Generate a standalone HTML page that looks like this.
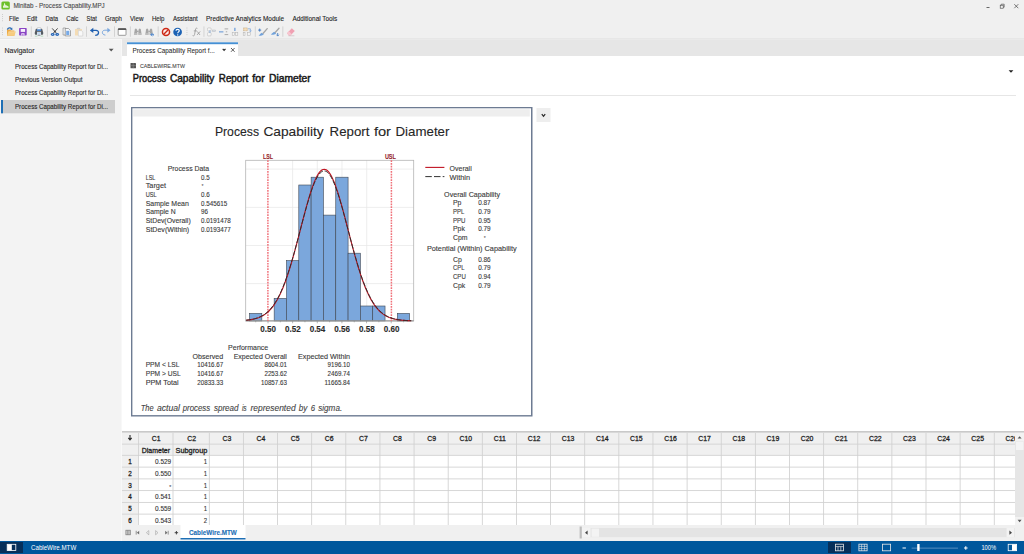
<!DOCTYPE html>
<html lang="en">
<head>
<meta charset="utf-8">
<title>Minitab - Process Capability.MPJ</title>
<style>
html,body{margin:0;padding:0;background:#ffffff;overflow:hidden;}
body{width:1024px;height:554px;font-family:"Liberation Sans",sans-serif;}
svg{display:block;position:absolute;left:0;top:0;}
svg text{font-family:"Liberation Sans",sans-serif;white-space:pre;}
</style>
</head>
<body>
<svg width="1024" height="554" viewBox="0 0 1024 554">
<rect x="0" y="0" width="1024" height="554" fill="#ffffff" />
<rect x="0" y="0" width="1024" height="39" fill="#f0f0f0" />
<rect x="0" y="38.4" width="1024" height="0.9" fill="#e2e2e2" />
<rect x="0" y="39.3" width="122" height="0.7" fill="#fafafa" />
<rect x="122" y="39.3" width="902" height="0.7" fill="#e6e6e6" />
<rect x="0" y="40" width="121" height="501" fill="#f3f3f3" />
<rect x="121" y="40" width="1" height="501" fill="#f8f8f8" />
<rect x="122" y="40" width="902" height="16" fill="#e6e6e6" />
<rect x="127" y="42.3" width="111" height="13.7" fill="#ffffff" />
<rect x="127" y="42.3" width="111" height="1.9" fill="#4590d4" />
<rect x="1" y="100" width="114" height="13.3" fill="#cdcdcd" />
<rect x="1" y="100" width="2" height="13.3" fill="#1e6fb5" />
<rect x="1.4" y="1.4" width="8.4" height="8" rx="1.5" fill="#6dc02a"/>
<path d="M3 7.7 V6.3 C3.6 5.9 4 5 4.1 3.3 H5 C5.2 4.8 5.6 5.4 6.2 5.6 L6.6 5.2 C7.2 5.8 8 6 8.6 6.4 V7.7 Z" fill="#ffffff" opacity="0.82"/>
<text x="13.4" y="7.6" font-size="6.5" textLength="91.30" lengthAdjust="spacingAndGlyphs" stroke="#4a4a4a" stroke-width="0.11" fill="#4a4a4a">Minitab - Process Capability.MPJ</text>
<line x1="986.5" y1="7.5" x2="989.5" y2="7.5" stroke="#444" stroke-width="0.8" />
<rect x="1000.2" y="5.2" width="3" height="3" fill="none" stroke="#444" stroke-width="0.6"/>
<path d="M1001.2 5.2 V4.2 H1004.2 V7.2 H1003.2" fill="none" stroke="#444" stroke-width="0.6"/>
<path d="M1014.3 4.2 L1018.3 8.2 M1018.3 4.2 L1014.3 8.2" stroke="#444" stroke-width="0.7" fill="none"/>
<rect x="2.2" y="14" width="0.7" height="0.9" fill="#b8b8b8" />
<rect x="2.2" y="16.1" width="0.7" height="0.9" fill="#b8b8b8" />
<rect x="2.2" y="18.2" width="0.7" height="0.9" fill="#b8b8b8" />
<rect x="2.2" y="20.3" width="0.7" height="0.9" fill="#b8b8b8" />
<text x="9" y="20.6" font-size="6.5" textLength="10.00" lengthAdjust="spacingAndGlyphs" stroke="#1e1e1e" stroke-width="0.11" fill="#1e1e1e">File</text>
<text x="26.9" y="20.6" font-size="6.5" textLength="10.35" lengthAdjust="spacingAndGlyphs" stroke="#1e1e1e" stroke-width="0.11" fill="#1e1e1e">Edit</text>
<text x="45.6" y="20.6" font-size="6.5" textLength="12.50" lengthAdjust="spacingAndGlyphs" stroke="#1e1e1e" stroke-width="0.11" fill="#1e1e1e">Data</text>
<text x="66.25" y="20.6" font-size="6.5" textLength="12.15" lengthAdjust="spacingAndGlyphs" stroke="#1e1e1e" stroke-width="0.11" fill="#1e1e1e">Calc</text>
<text x="86.6" y="20.6" font-size="6.5" textLength="10.30" lengthAdjust="spacingAndGlyphs" stroke="#1e1e1e" stroke-width="0.11" fill="#1e1e1e">Stat</text>
<text x="105" y="20.6" font-size="6.5" textLength="16.90" lengthAdjust="spacingAndGlyphs" stroke="#1e1e1e" stroke-width="0.11" fill="#1e1e1e">Graph</text>
<text x="130" y="20.6" font-size="6.5" textLength="13.50" lengthAdjust="spacingAndGlyphs" stroke="#1e1e1e" stroke-width="0.11" fill="#1e1e1e">View</text>
<text x="151.9" y="20.6" font-size="6.5" textLength="12.50" lengthAdjust="spacingAndGlyphs" stroke="#1e1e1e" stroke-width="0.11" fill="#1e1e1e">Help</text>
<text x="172.9" y="20.6" font-size="6.5" textLength="24.85" lengthAdjust="spacingAndGlyphs" stroke="#1e1e1e" stroke-width="0.11" fill="#1e1e1e">Assistant</text>
<text x="206" y="20.6" font-size="6.5" textLength="78.00" lengthAdjust="spacingAndGlyphs" stroke="#1e1e1e" stroke-width="0.11" fill="#1e1e1e">Predictive Analytics Module</text>
<text x="292.5" y="20.6" font-size="6.5" textLength="44.75" lengthAdjust="spacingAndGlyphs" stroke="#1e1e1e" stroke-width="0.11" fill="#1e1e1e">Additional Tools</text>
<text x="4.4" y="52.9" font-size="7.1" textLength="30.10" lengthAdjust="spacingAndGlyphs" stroke="#2a2a2a" stroke-width="0.11" fill="#2a2a2a">Navigator</text>
<path d="M108.8 48.8 L113.6 48.8 L111.2 51.6 Z" fill="#555"/>
<text x="15" y="68.9" font-size="6.5" textLength="93.00" lengthAdjust="spacingAndGlyphs" stroke="#1e1e1e" stroke-width="0.11" fill="#1e1e1e">Process Capability Report for Di...</text>
<text x="15" y="82" font-size="6.5" textLength="67.60" lengthAdjust="spacingAndGlyphs" stroke="#1e1e1e" stroke-width="0.11" fill="#1e1e1e">Previous Version Output</text>
<text x="15" y="95.4" font-size="6.5" textLength="93.00" lengthAdjust="spacingAndGlyphs" stroke="#1e1e1e" stroke-width="0.11" fill="#1e1e1e">Process Capability Report for Di...</text>
<text x="15" y="108.5" font-size="6.5" textLength="93.00" lengthAdjust="spacingAndGlyphs" stroke="#1e1e1e" stroke-width="0.11" fill="#1e1e1e">Process Capability Report for Di...</text>
<text x="132.4" y="52.6" font-size="6.5" textLength="82.50" lengthAdjust="spacingAndGlyphs" stroke="#2a2a2a" stroke-width="0.06" fill="#2a2a2a">Process Capability Report f...</text>
<path d="M222.7 48.8 L224.1 50.4 L225.5 48.8" fill="none" stroke="#333" stroke-width="1.15"/>
<path d="M231 48 L234.6 51.8 M234.6 48 L231 51.8" stroke="#333" stroke-width="0.8" fill="none"/>
<rect x="130.5" y="63" width="5.5" height="5.3" rx="0.6" fill="#555"/>
<path d="M130.5 65.6 H136 M133.2 63 V68.3" stroke="#999" stroke-width="0.5"/>
<text x="139.9" y="67.6" font-size="6.2" textLength="45.00" lengthAdjust="spacingAndGlyphs" stroke="#4a4a4a" stroke-width="0.11" fill="#4a4a4a">CABLEWIRE.MTW</text>
<text x="132.8" y="82" font-size="10" textLength="33.30" lengthAdjust="spacingAndGlyphs" stroke="#1a1a1a" stroke-width="0.48" fill="#1a1a1a">Process</text>
<text x="169.9" y="82" font-size="10" textLength="44.40" lengthAdjust="spacingAndGlyphs" stroke="#1a1a1a" stroke-width="0.48" fill="#1a1a1a">Capability</text>
<text x="218.8" y="82" font-size="10" textLength="29.50" lengthAdjust="spacingAndGlyphs" stroke="#1a1a1a" stroke-width="0.48" fill="#1a1a1a">Report</text>
<text x="252.3" y="82" font-size="10" textLength="12.40" lengthAdjust="spacingAndGlyphs" stroke="#1a1a1a" stroke-width="0.48" fill="#1a1a1a">for</text>
<text x="269.1" y="82" font-size="10" textLength="41.60" lengthAdjust="spacingAndGlyphs" stroke="#1a1a1a" stroke-width="0.48" fill="#1a1a1a">Diameter</text>
<path d="M1008.6 70.2 L1013.4 70.2 L1011 72.8 Z" fill="#222"/>
<rect x="130" y="95" width="886" height="1" fill="#e6e6e6" />
<rect x="131" y="107" width="401.5" height="309.5" fill="#6d7b92" />
<rect x="132.4" y="108.3" width="398.6" height="306.8" fill="#ffffff" />
<rect x="133.2" y="109.2" width="396.6" height="7.3" fill="#eeeeee" />
<rect x="536.5" y="108" width="14" height="14" fill="#eeeeee" />
<path d="M541.8 114.2 L543.5 116.3 L545.2 114.2" fill="none" stroke="#2a2a2a" stroke-width="1.25"/>
<rect x="122" y="431" width="902" height="1.8" fill="#c9c9c9" />
<rect x="122" y="432.8" width="893" height="22.5" fill="#f0f0f0" />
<rect x="122" y="455.3" width="16.6" height="69.7" fill="#f0f0f0" />
<rect x="138.18" y="432.8" width="0.85" height="92.2" fill="#d0d0d0" />
<rect x="172.58" y="432.8" width="0.85" height="92.2" fill="#d0d0d0" />
<rect x="208.88" y="432.8" width="0.85" height="92.2" fill="#d0d0d0" />
<rect x="242.98" y="432.8" width="0.85" height="92.2" fill="#d0d0d0" />
<rect x="277.11" y="432.8" width="0.85" height="92.2" fill="#d0d0d0" />
<rect x="311.24" y="432.8" width="0.85" height="92.2" fill="#d0d0d0" />
<rect x="345.37" y="432.8" width="0.85" height="92.2" fill="#d0d0d0" />
<rect x="379.5" y="432.8" width="0.85" height="92.2" fill="#d0d0d0" />
<rect x="413.63" y="432.8" width="0.85" height="92.2" fill="#d0d0d0" />
<rect x="447.76" y="432.8" width="0.85" height="92.2" fill="#d0d0d0" />
<rect x="481.89" y="432.8" width="0.85" height="92.2" fill="#d0d0d0" />
<rect x="516.02" y="432.8" width="0.85" height="92.2" fill="#d0d0d0" />
<rect x="550.15" y="432.8" width="0.85" height="92.2" fill="#d0d0d0" />
<rect x="584.28" y="432.8" width="0.85" height="92.2" fill="#d0d0d0" />
<rect x="618.41" y="432.8" width="0.85" height="92.2" fill="#d0d0d0" />
<rect x="652.54" y="432.8" width="0.85" height="92.2" fill="#d0d0d0" />
<rect x="686.67" y="432.8" width="0.85" height="92.2" fill="#d0d0d0" />
<rect x="720.8" y="432.8" width="0.85" height="92.2" fill="#d0d0d0" />
<rect x="754.93" y="432.8" width="0.85" height="92.2" fill="#d0d0d0" />
<rect x="789.06" y="432.8" width="0.85" height="92.2" fill="#d0d0d0" />
<rect x="823.19" y="432.8" width="0.85" height="92.2" fill="#d0d0d0" />
<rect x="857.32" y="432.8" width="0.85" height="92.2" fill="#d0d0d0" />
<rect x="891.45" y="432.8" width="0.85" height="92.2" fill="#d0d0d0" />
<rect x="925.58" y="432.8" width="0.85" height="92.2" fill="#d0d0d0" />
<rect x="959.71" y="432.8" width="0.85" height="92.2" fill="#d0d0d0" />
<rect x="993.84" y="432.8" width="0.85" height="92.2" fill="#d0d0d0" />
<rect x="122" y="443.68" width="893" height="0.85" fill="#d0d0d0" />
<rect x="122" y="454.88" width="893" height="0.85" fill="#d0d0d0" />
<rect x="122" y="466.68" width="893" height="0.85" fill="#d0d0d0" />
<rect x="122" y="478.48" width="893" height="0.85" fill="#d0d0d0" />
<rect x="122" y="490.18" width="893" height="0.85" fill="#d0d0d0" />
<rect x="122" y="501.98" width="893" height="0.85" fill="#d0d0d0" />
<rect x="122" y="513.68" width="893" height="0.85" fill="#d0d0d0" />
<text x="156.3" y="440.9" font-size="6.7" textLength="8.82" lengthAdjust="spacingAndGlyphs" text-anchor="middle" stroke="#1e1e1e" stroke-width="0.26" fill="#1e1e1e">C1</text>
<text x="191.65" y="440.9" font-size="6.7" textLength="8.82" lengthAdjust="spacingAndGlyphs" text-anchor="middle" stroke="#1e1e1e" stroke-width="0.26" fill="#1e1e1e">C2</text>
<text x="226.85" y="440.9" font-size="6.7" textLength="8.82" lengthAdjust="spacingAndGlyphs" text-anchor="middle" stroke="#1e1e1e" stroke-width="0.26" fill="#1e1e1e">C3</text>
<text x="260.965" y="440.9" font-size="6.7" textLength="8.82" lengthAdjust="spacingAndGlyphs" text-anchor="middle" stroke="#1e1e1e" stroke-width="0.26" fill="#1e1e1e">C4</text>
<text x="295.095" y="440.9" font-size="6.7" textLength="8.82" lengthAdjust="spacingAndGlyphs" text-anchor="middle" stroke="#1e1e1e" stroke-width="0.26" fill="#1e1e1e">C5</text>
<text x="329.225" y="440.9" font-size="6.7" textLength="8.82" lengthAdjust="spacingAndGlyphs" text-anchor="middle" stroke="#1e1e1e" stroke-width="0.26" fill="#1e1e1e">C6</text>
<text x="363.355" y="440.9" font-size="6.7" textLength="8.82" lengthAdjust="spacingAndGlyphs" text-anchor="middle" stroke="#1e1e1e" stroke-width="0.26" fill="#1e1e1e">C7</text>
<text x="397.485" y="440.9" font-size="6.7" textLength="8.82" lengthAdjust="spacingAndGlyphs" text-anchor="middle" stroke="#1e1e1e" stroke-width="0.26" fill="#1e1e1e">C8</text>
<text x="431.615" y="440.9" font-size="6.7" textLength="8.82" lengthAdjust="spacingAndGlyphs" text-anchor="middle" stroke="#1e1e1e" stroke-width="0.26" fill="#1e1e1e">C9</text>
<text x="465.745" y="440.9" font-size="6.7" textLength="12.66" lengthAdjust="spacingAndGlyphs" text-anchor="middle" stroke="#1e1e1e" stroke-width="0.26" fill="#1e1e1e">C10</text>
<text x="499.875" y="440.9" font-size="6.7" textLength="12.15" lengthAdjust="spacingAndGlyphs" text-anchor="middle" stroke="#1e1e1e" stroke-width="0.26" fill="#1e1e1e">C11</text>
<text x="534.005" y="440.9" font-size="6.7" textLength="12.66" lengthAdjust="spacingAndGlyphs" text-anchor="middle" stroke="#1e1e1e" stroke-width="0.26" fill="#1e1e1e">C12</text>
<text x="568.135" y="440.9" font-size="6.7" textLength="12.66" lengthAdjust="spacingAndGlyphs" text-anchor="middle" stroke="#1e1e1e" stroke-width="0.26" fill="#1e1e1e">C13</text>
<text x="602.265" y="440.9" font-size="6.7" textLength="12.66" lengthAdjust="spacingAndGlyphs" text-anchor="middle" stroke="#1e1e1e" stroke-width="0.26" fill="#1e1e1e">C14</text>
<text x="636.395" y="440.9" font-size="6.7" textLength="12.66" lengthAdjust="spacingAndGlyphs" text-anchor="middle" stroke="#1e1e1e" stroke-width="0.26" fill="#1e1e1e">C15</text>
<text x="670.525" y="440.9" font-size="6.7" textLength="12.66" lengthAdjust="spacingAndGlyphs" text-anchor="middle" stroke="#1e1e1e" stroke-width="0.26" fill="#1e1e1e">C16</text>
<text x="704.655" y="440.9" font-size="6.7" textLength="12.66" lengthAdjust="spacingAndGlyphs" text-anchor="middle" stroke="#1e1e1e" stroke-width="0.26" fill="#1e1e1e">C17</text>
<text x="738.785" y="440.9" font-size="6.7" textLength="12.66" lengthAdjust="spacingAndGlyphs" text-anchor="middle" stroke="#1e1e1e" stroke-width="0.26" fill="#1e1e1e">C18</text>
<text x="772.915" y="440.9" font-size="6.7" textLength="12.66" lengthAdjust="spacingAndGlyphs" text-anchor="middle" stroke="#1e1e1e" stroke-width="0.26" fill="#1e1e1e">C19</text>
<text x="807.045" y="440.9" font-size="6.7" textLength="12.66" lengthAdjust="spacingAndGlyphs" text-anchor="middle" stroke="#1e1e1e" stroke-width="0.26" fill="#1e1e1e">C20</text>
<text x="841.175" y="440.9" font-size="6.7" textLength="12.66" lengthAdjust="spacingAndGlyphs" text-anchor="middle" stroke="#1e1e1e" stroke-width="0.26" fill="#1e1e1e">C21</text>
<text x="875.305" y="440.9" font-size="6.7" textLength="12.66" lengthAdjust="spacingAndGlyphs" text-anchor="middle" stroke="#1e1e1e" stroke-width="0.26" fill="#1e1e1e">C22</text>
<text x="909.435" y="440.9" font-size="6.7" textLength="12.66" lengthAdjust="spacingAndGlyphs" text-anchor="middle" stroke="#1e1e1e" stroke-width="0.26" fill="#1e1e1e">C23</text>
<text x="943.565" y="440.9" font-size="6.7" textLength="12.66" lengthAdjust="spacingAndGlyphs" text-anchor="middle" stroke="#1e1e1e" stroke-width="0.26" fill="#1e1e1e">C24</text>
<text x="977.695" y="440.9" font-size="6.7" textLength="12.66" lengthAdjust="spacingAndGlyphs" text-anchor="middle" stroke="#1e1e1e" stroke-width="0.26" fill="#1e1e1e">C25</text>
<clipPath id="c26"><rect x="995" y="433" width="20" height="11"/></clipPath>
<g clip-path="url(#c26)">
<text x="1005.6" y="440.9" font-size="6.7" textLength="11.92" lengthAdjust="spacingAndGlyphs" stroke="#1e1e1e" stroke-width="0.26" fill="#1e1e1e">C26</text>
</g>
<text x="141.8" y="452.5" font-size="6.7" textLength="28.20" lengthAdjust="spacingAndGlyphs" stroke="#1e1e1e" stroke-width="0.28" fill="#1e1e1e">Diameter</text>
<text x="175.5" y="452.5" font-size="6.7" textLength="31.90" lengthAdjust="spacingAndGlyphs" stroke="#1e1e1e" stroke-width="0.28" fill="#1e1e1e">Subgroup</text>
<path d="M130 435 V439.6 M128.3 437.8 L130 439.8 L131.7 437.8" fill="none" stroke="#2a2a2a" stroke-width="1.1"/>
<text x="130" y="464" font-size="6.8" textLength="3.52" lengthAdjust="spacingAndGlyphs" text-anchor="middle" stroke="#1e1e1e" stroke-width="0.28" fill="#1e1e1e">1</text>
<text x="171.2" y="464" font-size="6.5" textLength="16.20" lengthAdjust="spacingAndGlyphs" text-anchor="end" stroke="#333" stroke-width="0.11" fill="#333">0.529</text>
<text x="207" y="464" font-size="6.5" textLength="3.36" lengthAdjust="spacingAndGlyphs" text-anchor="end" stroke="#333" stroke-width="0.11" fill="#333">1</text>
<text x="130" y="475.75" font-size="6.8" textLength="3.52" lengthAdjust="spacingAndGlyphs" text-anchor="middle" stroke="#1e1e1e" stroke-width="0.28" fill="#1e1e1e">2</text>
<text x="171.2" y="475.75" font-size="6.5" textLength="16.20" lengthAdjust="spacingAndGlyphs" text-anchor="end" stroke="#333" stroke-width="0.11" fill="#333">0.550</text>
<text x="207" y="475.75" font-size="6.5" textLength="3.36" lengthAdjust="spacingAndGlyphs" text-anchor="end" stroke="#333" stroke-width="0.11" fill="#333">1</text>
<text x="130" y="487.5" font-size="6.8" textLength="3.52" lengthAdjust="spacingAndGlyphs" text-anchor="middle" stroke="#1e1e1e" stroke-width="0.28" fill="#1e1e1e">3</text>
<text x="171.2" y="488.5" font-size="5.5" textLength="1.99" lengthAdjust="spacingAndGlyphs" text-anchor="end" stroke="#555" stroke-width="0.11" fill="#555">*</text>
<text x="207" y="487.5" font-size="6.5" textLength="3.36" lengthAdjust="spacingAndGlyphs" text-anchor="end" stroke="#333" stroke-width="0.11" fill="#333">1</text>
<text x="130" y="499.25" font-size="6.8" textLength="3.52" lengthAdjust="spacingAndGlyphs" text-anchor="middle" stroke="#1e1e1e" stroke-width="0.28" fill="#1e1e1e">4</text>
<text x="171.2" y="499.25" font-size="6.5" textLength="16.20" lengthAdjust="spacingAndGlyphs" text-anchor="end" stroke="#333" stroke-width="0.11" fill="#333">0.541</text>
<text x="207" y="499.25" font-size="6.5" textLength="3.36" lengthAdjust="spacingAndGlyphs" text-anchor="end" stroke="#333" stroke-width="0.11" fill="#333">1</text>
<text x="130" y="511" font-size="6.8" textLength="3.52" lengthAdjust="spacingAndGlyphs" text-anchor="middle" stroke="#1e1e1e" stroke-width="0.28" fill="#1e1e1e">5</text>
<text x="171.2" y="511" font-size="6.5" textLength="16.20" lengthAdjust="spacingAndGlyphs" text-anchor="end" stroke="#333" stroke-width="0.11" fill="#333">0.559</text>
<text x="207" y="511" font-size="6.5" textLength="3.36" lengthAdjust="spacingAndGlyphs" text-anchor="end" stroke="#333" stroke-width="0.11" fill="#333">1</text>
<text x="130" y="522.75" font-size="6.8" textLength="3.52" lengthAdjust="spacingAndGlyphs" text-anchor="middle" stroke="#1e1e1e" stroke-width="0.28" fill="#1e1e1e">6</text>
<text x="171.2" y="522.75" font-size="6.5" textLength="16.20" lengthAdjust="spacingAndGlyphs" text-anchor="end" stroke="#333" stroke-width="0.11" fill="#333">0.543</text>
<text x="207" y="522.75" font-size="6.5" textLength="3.36" lengthAdjust="spacingAndGlyphs" text-anchor="end" stroke="#333" stroke-width="0.11" fill="#333">2</text>
<rect x="1015" y="432.8" width="9" height="92.2" fill="#e6e6e6" />
<rect x="1015" y="432.8" width="9" height="8.7" fill="#f2f2f2" />
<path d="M1017.6 438.6 L1019.6 436.2 L1021.6 438.6 Z" fill="#555"/>
<rect x="1016" y="442" width="7.5" height="8" fill="#f4f4f4" />
<rect x="1015" y="517" width="9" height="8" fill="#f2f2f2" />
<path d="M1017.6 519.8 L1021.6 519.8 L1019.6 522.2 Z" fill="#555"/>
<rect x="122" y="525" width="902" height="16" fill="#f0f0f0" />
<rect x="180.5" y="525" width="65" height="15" fill="#ffffff" />
<rect x="180.5" y="538" width="65" height="1.5" fill="#1e6fb5" />
<text x="189" y="535" font-size="6.6" textLength="47.80" lengthAdjust="spacingAndGlyphs" font-weight="bold" stroke="#1e6fb5" stroke-width="0.11" fill="#1e6fb5">CableWire.MTW</text>
<rect x="125.9" y="530.2" width="4.4" height="4.6" fill="#d8d8d8" stroke="#7a7a7a" stroke-width="0.7"/>
<path d="M127.4 530.2 V534.8 M128.9 530.2 V534.8" stroke="#7a7a7a" stroke-width="0.6"/>
<path d="M136.2 530.8 V534.6" stroke="#6a6a6a" stroke-width="0.7"/><path d="M139.2 530.8 L136.9 532.7 L139.2 534.6 Z" fill="#6a6a6a"/>
<path d="M148.8 530.6 L146.4 532.7 L148.8 534.8 Z" fill="none" stroke="#9a9a9a" stroke-width="0.55"/>
<path d="M155.6 530.6 L158 532.7 L155.6 534.8 Z" fill="none" stroke="#9a9a9a" stroke-width="0.55"/>
<path d="M168.2 530.8 V534.6" stroke="#6a6a6a" stroke-width="0.7"/><path d="M165.2 530.8 L167.5 532.7 L165.2 534.6 Z" fill="#6a6a6a"/>
<path d="M174.7 532.7 H178.1 M176.4 531 V534.4" stroke="#3a3a3a" stroke-width="0.95"/>
<rect x="579.6" y="526.5" width="2.2" height="12" fill="#bdbdbd" />
<rect x="582" y="528" width="433" height="9.2" fill="#e4e4e4" />
<rect x="582" y="528" width="8.5" height="9.2" fill="#f3f3f3" />
<path d="M587.6 530.6 L585 532.7 L587.6 534.8 Z" fill="#444"/>
<rect x="591.6" y="528.6" width="7.4" height="8.2" fill="#f3f3f3" />
<rect x="1006.6" y="528" width="7.6" height="9.2" fill="#f3f3f3" />
<path d="M1009.4 530.6 L1012 532.7 L1009.4 534.8 Z" fill="#444"/>
<rect x="0" y="541" width="1024" height="13" fill="#00579c" />
<rect x="0" y="542" width="23" height="11" fill="#062f5a" />
<rect x="7.2" y="544.3" width="8.6" height="6.2" fill="none" stroke="#fff" stroke-width="0.8"/>
<rect x="7.2" y="544.3" width="4.6" height="6.2" fill="#ffffff" />
<text x="31" y="550" font-size="6.5" textLength="45.20" lengthAdjust="spacingAndGlyphs" fill="#ffffff">CableWire.MTW</text>
<rect x="828" y="542" width="23" height="11" fill="#062f5a" />
<rect x="835.4" y="544.2" width="8" height="6.6" fill="none" stroke="#e8e8e8" stroke-width="0.8"/>
<path d="M835.4 546.6 H843.4 M838 546.6 V550.8 M840.8 546.6 V550.8" stroke="#e8e8e8" stroke-width="0.7"/>
<rect x="858.9" y="544.2" width="8.2" height="6.6" fill="none" stroke="#e8e8e8" stroke-width="0.8"/>
<path d="M858.9 546.4 H867.1 M858.9 548.6 H867.1 M861.6 544.2 V550.8 M864.4 544.2 V550.8" stroke="#e8e8e8" stroke-width="0.6"/>
<rect x="882.4" y="544.2" width="8.2" height="6.6" fill="none" stroke="#e8e8e8" stroke-width="0.8"/>
<rect x="902.5" y="547.5" width="3.4" height="1" fill="#ffffff" />
<rect x="911.6" y="547.7" width="46.4" height="0.8" fill="#6b9cc8" />
<rect x="917.2" y="544" width="2.4" height="7" fill="#ffffff" />
<path d="M964 548 H967.6 M965.8 546.2 V549.8" stroke="#fff" stroke-width="1"/>
<text x="981.4" y="549.7" font-size="6.3" textLength="14.60" lengthAdjust="spacingAndGlyphs" fill="#ffffff">100%</text>
<rect x="1008.2" y="544.3" width="8.4" height="6.4" fill="none" stroke="#fff" stroke-width="0.8"/>
<rect x="1012" y="544.3" width="4.6" height="6.4" fill="#ffffff" />
<rect x="2.2" y="27.6" width="0.7" height="0.9" fill="#b8b8b8" />
<rect x="2.2" y="29.8" width="0.7" height="0.9" fill="#b8b8b8" />
<rect x="2.2" y="32" width="0.7" height="0.9" fill="#b8b8b8" />
<rect x="2.2" y="34.2" width="0.7" height="0.9" fill="#b8b8b8" />
<rect x="186.6" y="27.6" width="0.7" height="0.9" fill="#b8b8b8" />
<rect x="186.6" y="29.8" width="0.7" height="0.9" fill="#b8b8b8" />
<rect x="186.6" y="32" width="0.7" height="0.9" fill="#b8b8b8" />
<rect x="186.6" y="34.2" width="0.7" height="0.9" fill="#b8b8b8" />
<rect x="30.8" y="26.4" width="0.9" height="10.4" fill="#d0d0d0" />
<rect x="46.9" y="26.4" width="0.9" height="10.4" fill="#d0d0d0" />
<rect x="86" y="26.4" width="0.9" height="10.4" fill="#d0d0d0" />
<rect x="114.1" y="26.4" width="0.9" height="10.4" fill="#d0d0d0" />
<rect x="129.9" y="26.4" width="0.9" height="10.4" fill="#d0d0d0" />
<rect x="157.7" y="26.4" width="0.9" height="10.4" fill="#d0d0d0" />
<rect x="203.5" y="26.4" width="0.9" height="10.4" fill="#d0d0d0" />
<rect x="254.8" y="26.4" width="0.9" height="10.4" fill="#d0d0d0" />
<rect x="282.4" y="26.4" width="0.9" height="10.4" fill="#d0d0d0" />
<path d="M7 29.6 H10 L10.9 30.6 H14.4 V35.7 H7 Z" fill="#eeaa44"/>
<path d="M7 35.7 L8.4 31.6 H15.8 L14.4 35.7 Z" fill="#f7cc80"/>
<path d="M8.6 31.9 H15.4" stroke="#fbe3b5" stroke-width="0.5"/>
<path d="M7.4 29.7 C7.7 27.6 10.6 27.3 11.6 29" fill="none" stroke="#2a6ab5" stroke-width="1.25"/>
<path d="M10.2 29.9 L12.5 29.7 L12.2 27.5 Z" fill="#2a6ab5"/>
<rect x="19.1" y="28" width="7.6" height="7.5" rx="0.7" fill="#8a44c4"/>
<rect x="20.7" y="29" width="4.4" height="2.9" fill="#f6effc" />
<rect x="21.3" y="33.3" width="3.2" height="2.2" fill="#f6effc" />
<rect x="22.4" y="34.1" width="1" height="1.4" fill="#8a44c4" />
<path d="M35.4 30.4 C35.4 29.2 36.4 28.8 37 28.8 V34.8 H36 C35 34.8 34.6 33.6 34.8 32.4 Z" fill="#565c62"/>
<path d="M42.6 30.4 C42.6 29.2 41.6 28.8 41 28.8 V34.8 H42 C43 34.8 43.4 33.6 43.2 32.4 Z" fill="#565c62"/>
<rect x="37.3" y="27.7" width="3.6" height="2.2" rx="0.4" fill="#fdfdfd" stroke="#8a8f94" stroke-width="0.4"/>
<rect x="36.9" y="29.4" width="4.3" height="1.5" fill="#3a7fd4" />
<rect x="37" y="30.9" width="4.1" height="1.3" fill="#6d747b" />
<ellipse cx="39" cy="33.5" rx="1.9" ry="1.2" fill="#c3dcf6"/>
<rect x="37.6" y="34.7" width="2.9" height="1.2" fill="#9aa0a6" />
<rect x="34.8" y="35.8" width="2.6" height="0.6" fill="#8fd0a8" />
<rect x="40.7" y="35.8" width="2.5" height="0.6" fill="#8fd0a8" />
<path d="M52.2 28.4 L56.6 33.4 M57.6 28.4 L53.2 33.4" stroke="#4a4a4a" stroke-width="1" fill="none"/>
<circle cx="54.9" cy="31.5" r="0.7" fill="#333"/>
<ellipse cx="52.7" cy="34.5" rx="1.9" ry="1.45" fill="#2a68b8"/>
<ellipse cx="57.2" cy="34.5" rx="1.9" ry="1.45" fill="#2a68b8"/>
<ellipse cx="52.6" cy="34.6" rx="0.6" ry="0.4" fill="#e8f0fa"/>
<ellipse cx="57.3" cy="34.6" rx="0.6" ry="0.4" fill="#e8f0fa"/>
<path d="M63.1 28 H65.6 V35 H63.1 Z" fill="#fbfbfb" stroke="#7c7c7c" stroke-width="0.6"/>
<path d="M65.2 28.5 H68.4 L70.5 30.6 V35.9 H65.2 Z" fill="#f9fbfd" stroke="#6f6f6f" stroke-width="0.6"/>
<rect x="66.2" y="30.8" width="3.1" height="4.2" fill="#78aae6" />
<g opacity="0.75">
<path d="M75 29 H82 V31 H78 V35.5 H75 Z" fill="#f6d6a2"/>
<path d="M76.6 29.3 C76.6 27.4 80.4 27.4 80.4 29.3 Z" fill="#c4c4c4"/>
<path d="M78.4 30.6 H81.4 L82.8 32 V36 H78.4 Z" fill="#fdfdfd" stroke="#b5b5b5" stroke-width="0.5"/>
</g>
<path d="M92 30.4 H96 C99.6 30.4 99.4 35.3 95.2 35.3" fill="none" stroke="#1f5fb0" stroke-width="1.3"/>
<path d="M89.9 30.4 L93.3 27.7 V33 Z" fill="#1f5fb0"/>
<path d="M108.4 30.2 H104.8 C101.4 30.2 101.6 35.1 105.4 35.1" fill="none" stroke="#7aa7de" stroke-width="1"/>
<path d="M110.5 30.2 L107.4 27.7 V32.7 Z" fill="#7aa7de"/>
<rect x="118.2" y="28.6" width="7.8" height="6.7" rx="0.7" fill="#ffffff" stroke="#6a6a6a" stroke-width="0.65"/>
<path d="M118 29.9 V29.1 Q118 28.2 118.9 28.2 H125.3 Q126.2 28.2 126.2 29.1 V29.9 Z" fill="#555"/>
<g fill="#a6a6a6">
<path d="M133.9 34.8 L134.8 29.6 Q135.9 27.4 136.9 29.6 L137.4 34.8 Z"/>
<path d="M138.2 34.8 L138.7 29.6 Q139.7 27.4 140.8 29.6 L141.7 34.8 Z"/>
<rect x="137.0" y="30.6" width="1.6" height="1.5"/>
<rect x="134.1" y="33.5" width="3.2" height="0.7" fill="#cfcfcf"/>
<rect x="138.3" y="33.5" width="3.2" height="0.7" fill="#cfcfcf"/>
<path d="M145.2 34.8 L146.1 29.6 Q147.2 27.4 148.2 29.6 L148.7 34.8 Z"/>
<path d="M149.5 34.8 L150.0 29.6 Q151.0 27.4 152.1 29.6 L153.0 34.8 Z"/>
<rect x="148.3" y="30.6" width="1.6" height="1.5"/>
<rect x="145.4" y="33.5" width="3.2" height="0.7" fill="#cfcfcf"/>
<rect x="149.6" y="33.5" width="3.2" height="0.7" fill="#cfcfcf"/>
</g>
<path d="M150.2 34.7 H153.6 M152.5 33.4 L153.9 34.7 L152.5 36 M151.6 33.2 V36" fill="none" stroke="#4a86d0" stroke-width="0.8"/>
<circle cx="166" cy="32" r="3.55" fill="#fdeeee" stroke="#cc2a18" stroke-width="1.5"/>
<path d="M163.8 34.2 L168.2 29.8" stroke="#cc2a18" stroke-width="1.4"/>
<circle cx="177.6" cy="32" r="4.35" fill="#1c62b4"/>
<path d="M176 30.7 C176 28.9 179.3 28.9 179.3 30.7 C179.3 31.9 177.7 31.9 177.7 33.3" fill="none" stroke="#ffffff" stroke-width="1.15"/>
<circle cx="177.7" cy="34.9" r="0.7" fill="#ffffff"/>
<path d="M197.4 28.4 C196 27.6 195.6 28.6 195.4 30 L194.6 34.4 C194.4 35.8 193.6 36.2 192.6 35.6 M193.8 30.9 H196.8" fill="none" stroke="#8c8c8c" stroke-width="0.7"/>
<path d="M197.2 31.4 L200 35 M200.2 31.4 L197 35" fill="none" stroke="#8c8c8c" stroke-width="0.7"/>
<g opacity="0.62">
<rect x="207.4" y="27.9" width="3.8" height="3" rx="1" fill="#fafafa" stroke="#8f8f8f" stroke-width="0.5"/>
<rect x="207.4" y="32.6" width="3.8" height="3.3" rx="1" fill="#fafafa" stroke="#8f8f8f" stroke-width="0.5"/>
<path d="M209.9 30.2 V32.4 M209.1 31.6 L209.9 32.6 L210.7 31.6" fill="none" stroke="#3f7fd0" stroke-width="0.7"/>
<rect x="212.4" y="30" width="3.4" height="1.7" fill="#c9d6e6" stroke="#8f8f8f" stroke-width="0.4"/>
<rect x="219" y="31.2" width="4.4" height="1.3" fill="#3f7fd0" />
<path d="M224.6 28.9 H228.2 M224.6 34.6 H228.2 M225.8 31.8 H227.2" stroke="#7f7f7f" stroke-width="1"/>
<rect x="234.1" y="27.8" width="1.5" height="3.2" fill="#3f7fd0" />
<rect x="232.2" y="32.6" width="2.2" height="3.1" fill="#f6f6f6" stroke="#8a8a8a" stroke-width="0.5"/>
<rect x="235.6" y="32.6" width="2.2" height="3.1" fill="#f6f6f6" stroke="#8a8a8a" stroke-width="0.5"/>
<rect x="243.2" y="27.9" width="4.2" height="3" fill="#f0bd72" stroke="#a08a6a" stroke-width="0.4"/>
<path d="M245.3 27.9 V30.9 M243.2 29.4 H247.4" stroke="#fbe7c6" stroke-width="0.4"/>
<path d="M248 28.8 H250.4 V31.4 M249.4 30.6 L250.4 31.8 L251.4 30.6" fill="none" stroke="#3f7fd0" stroke-width="0.8"/>
<rect x="243.2" y="32.6" width="1.8" height="3.1" fill="#f6f6f6" stroke="#8a8a8a" stroke-width="0.5"/>
<rect x="247.4" y="32.6" width="2.8" height="3.1" fill="#f6f6f6" stroke="#8a8a8a" stroke-width="0.5"/>
</g>
<g opacity="0.85">
<path d="M259.7 28.6 V31.6 M258.2 30.1 H261.2" stroke="#2f6fc0" stroke-width="1"/>
<path d="M258.6 35.8 C259.6 34.8 260.6 33.4 262 32.8 L263.8 34.6 C262.6 35.6 260.4 35.9 258.6 35.8 Z" fill="#5b95d8"/>
<path d="M263.2 33.2 L267.2 28.6" stroke="#9a9a9a" stroke-width="1.3" stroke-linecap="round"/>
<path d="M270.8 34.6 C272 33.6 273 32.4 274.4 31.8 L276.2 33.4 C275 34.4 272.8 34.8 270.8 34.6 Z" fill="#5b95d8"/>
<path d="M275.4 32.2 L279 28.2" stroke="#9a9a9a" stroke-width="1.3" stroke-linecap="round"/>
<path d="M277.7 33 V35.8 M276.5 34.7 L277.7 36.1 L278.9 34.7" fill="none" stroke="#2f6fc0" stroke-width="0.9"/>
</g>
<path d="M287 33.2 L291.8 28.2 L294.8 30.9 L290.4 35.6 H288.9 Z" fill="#f0a0b2"/>
<path d="M287 33.2 L288.9 31.2 L291.6 33.9 L290.4 35.6 H288.9 Z" fill="#f7c6d0"/>
<rect x="288.4" y="35.6" width="6" height="0.55" fill="#c4b0b4" />
<text x="214.9" y="135.8" font-size="13" textLength="44.10" lengthAdjust="spacingAndGlyphs" stroke="#262626" stroke-width="0.11" fill="#262626">Process</text>
<text x="263.4" y="135.8" font-size="13" textLength="60.30" lengthAdjust="spacingAndGlyphs" stroke="#262626" stroke-width="0.11" fill="#262626">Capability</text>
<text x="329.6" y="135.8" font-size="13" textLength="39.80" lengthAdjust="spacingAndGlyphs" stroke="#262626" stroke-width="0.11" fill="#262626">Report</text>
<text x="373.9" y="135.8" font-size="13" textLength="17.10" lengthAdjust="spacingAndGlyphs" stroke="#262626" stroke-width="0.11" fill="#262626">for</text>
<text x="395.5" y="135.8" font-size="13" textLength="53.90" lengthAdjust="spacingAndGlyphs" stroke="#262626" stroke-width="0.11" fill="#262626">Diameter</text>
<text x="167.7" y="170.6" font-size="6.9" textLength="41.40" lengthAdjust="spacingAndGlyphs" stroke="#3a3a3a" stroke-width="0.11" fill="#3a3a3a">Process Data</text>
<text x="145.7" y="179.6" font-size="6.9" textLength="9.70" lengthAdjust="spacingAndGlyphs" stroke="#3a3a3a" stroke-width="0.11" fill="#3a3a3a">LSL</text>
<text x="201" y="179.6" font-size="6.9" textLength="8.73" lengthAdjust="spacingAndGlyphs" stroke="#3a3a3a" stroke-width="0.11" fill="#3a3a3a">0.5</text>
<text x="145.7" y="188.2" font-size="6.9" textLength="20.30" lengthAdjust="spacingAndGlyphs" stroke="#3a3a3a" stroke-width="0.11" fill="#3a3a3a">Target</text>
<text x="201.4" y="188.4" font-size="5.6" textLength="2.03" lengthAdjust="spacingAndGlyphs" fill="#3a3a3a">*</text>
<text x="145.7" y="196.9" font-size="6.9" textLength="11.00" lengthAdjust="spacingAndGlyphs" stroke="#3a3a3a" stroke-width="0.11" fill="#3a3a3a">USL</text>
<text x="201" y="196.9" font-size="6.9" textLength="8.73" lengthAdjust="spacingAndGlyphs" stroke="#3a3a3a" stroke-width="0.11" fill="#3a3a3a">0.6</text>
<text x="145.7" y="205.6" font-size="6.9" textLength="43.10" lengthAdjust="spacingAndGlyphs" stroke="#3a3a3a" stroke-width="0.11" fill="#3a3a3a">Sample Mean</text>
<text x="201" y="205.6" font-size="6.9" textLength="26.19" lengthAdjust="spacingAndGlyphs" stroke="#3a3a3a" stroke-width="0.11" fill="#3a3a3a">0.545615</text>
<text x="145.7" y="214.3" font-size="6.9" textLength="30.00" lengthAdjust="spacingAndGlyphs" stroke="#3a3a3a" stroke-width="0.11" fill="#3a3a3a">Sample N</text>
<text x="201" y="214.3" font-size="6.9" textLength="6.98" lengthAdjust="spacingAndGlyphs" stroke="#3a3a3a" stroke-width="0.11" fill="#3a3a3a">96</text>
<text x="145.7" y="222.8" font-size="6.9" textLength="45.00" lengthAdjust="spacingAndGlyphs" stroke="#3a3a3a" stroke-width="0.11" fill="#3a3a3a">StDev(Overall)</text>
<text x="201" y="222.8" font-size="6.9" textLength="29.68" lengthAdjust="spacingAndGlyphs" stroke="#3a3a3a" stroke-width="0.11" fill="#3a3a3a">0.0191478</text>
<text x="145.7" y="231.7" font-size="6.9" textLength="43.50" lengthAdjust="spacingAndGlyphs" stroke="#3a3a3a" stroke-width="0.11" fill="#3a3a3a">StDev(Within)</text>
<text x="201" y="231.7" font-size="6.9" textLength="29.70" lengthAdjust="spacingAndGlyphs" stroke="#3a3a3a" stroke-width="0.11" fill="#3a3a3a">0.0193477</text>
<rect x="245.7" y="160.3" width="168" height="160.6" fill="#ffffff" />
<line x1="292.6" y1="160.3" x2="292.6" y2="320.9" stroke="#e6e6e6" stroke-width="0.7" />
<line x1="317.3" y1="160.3" x2="317.3" y2="320.9" stroke="#e6e6e6" stroke-width="0.7" />
<line x1="342" y1="160.3" x2="342" y2="320.9" stroke="#e6e6e6" stroke-width="0.7" />
<line x1="366.7" y1="160.3" x2="366.7" y2="320.9" stroke="#e6e6e6" stroke-width="0.7" />
<line x1="245.7" y1="169.1" x2="413.7" y2="169.1" stroke="#e6e6e6" stroke-width="0.7" />
<line x1="245.7" y1="207.4" x2="413.7" y2="207.4" stroke="#e6e6e6" stroke-width="0.7" />
<line x1="245.7" y1="245.5" x2="413.7" y2="245.5" stroke="#e6e6e6" stroke-width="0.7" />
<line x1="245.7" y1="283.6" x2="413.7" y2="283.6" stroke="#e6e6e6" stroke-width="0.7" />
<rect x="249.52" y="313.4" width="12.32" height="7.50" fill="#7ba7dc" stroke="#3f4652" stroke-width="0.6"/>
<rect x="274.16" y="298.4" width="12.32" height="22.50" fill="#7ba7dc" stroke="#3f4652" stroke-width="0.6"/>
<rect x="286.48" y="260.6" width="12.32" height="60.30" fill="#7ba7dc" stroke="#3f4652" stroke-width="0.6"/>
<rect x="298.80" y="185" width="12.32" height="135.90" fill="#7ba7dc" stroke="#3f4652" stroke-width="0.6"/>
<rect x="311.12" y="177.2" width="12.32" height="143.70" fill="#7ba7dc" stroke="#3f4652" stroke-width="0.6"/>
<rect x="323.44" y="215.1" width="12.32" height="105.80" fill="#7ba7dc" stroke="#3f4652" stroke-width="0.6"/>
<rect x="335.76" y="177.2" width="12.32" height="143.70" fill="#7ba7dc" stroke="#3f4652" stroke-width="0.6"/>
<rect x="348.08" y="253.2" width="12.32" height="67.70" fill="#7ba7dc" stroke="#3f4652" stroke-width="0.6"/>
<rect x="360.40" y="306" width="12.32" height="14.90" fill="#7ba7dc" stroke="#3f4652" stroke-width="0.6"/>
<rect x="372.72" y="306" width="12.32" height="14.90" fill="#7ba7dc" stroke="#3f4652" stroke-width="0.6"/>
<rect x="397.36" y="313.4" width="12.32" height="7.50" fill="#7ba7dc" stroke="#3f4652" stroke-width="0.6"/>
<rect x="245.7" y="160.3" width="168" height="160.6" fill="none" stroke="#b4b4b4" stroke-width="0.8"/>
<line x1="245.7" y1="320.9" x2="413.7" y2="320.9" stroke="#8a8a8a" stroke-width="0.9" />
<line x1="255.68" y1="320.9" x2="255.68" y2="322.3" stroke="#8a8a8a" stroke-width="0.6" />
<line x1="268" y1="320.9" x2="268" y2="323.3" stroke="#8a8a8a" stroke-width="0.6" />
<line x1="280.32" y1="320.9" x2="280.32" y2="322.3" stroke="#8a8a8a" stroke-width="0.6" />
<line x1="292.64" y1="320.9" x2="292.64" y2="323.3" stroke="#8a8a8a" stroke-width="0.6" />
<line x1="304.96" y1="320.9" x2="304.96" y2="322.3" stroke="#8a8a8a" stroke-width="0.6" />
<line x1="317.28" y1="320.9" x2="317.28" y2="323.3" stroke="#8a8a8a" stroke-width="0.6" />
<line x1="329.6" y1="320.9" x2="329.6" y2="322.3" stroke="#8a8a8a" stroke-width="0.6" />
<line x1="341.92" y1="320.9" x2="341.92" y2="323.3" stroke="#8a8a8a" stroke-width="0.6" />
<line x1="354.24" y1="320.9" x2="354.24" y2="322.3" stroke="#8a8a8a" stroke-width="0.6" />
<line x1="366.56" y1="320.9" x2="366.56" y2="323.3" stroke="#8a8a8a" stroke-width="0.6" />
<line x1="378.88" y1="320.9" x2="378.88" y2="322.3" stroke="#8a8a8a" stroke-width="0.6" />
<line x1="391.2" y1="320.9" x2="391.2" y2="323.3" stroke="#8a8a8a" stroke-width="0.6" />
<line x1="403.52" y1="320.9" x2="403.52" y2="322.3" stroke="#8a8a8a" stroke-width="0.6" />
<line x1="267.9" y1="160.3" x2="267.9" y2="320.9" stroke="#f0727a" stroke-width="1.5" stroke-dasharray="1.7 1.0"/>
<line x1="391.4" y1="160.3" x2="391.4" y2="320.9" stroke="#f0727a" stroke-width="1.5" stroke-dasharray="1.7 1.0"/>
<text x="267.9" y="159" font-size="6.7" textLength="9.90" lengthAdjust="spacingAndGlyphs" text-anchor="middle" font-weight="bold" stroke="#961f2c" stroke-width="0.11" fill="#961f2c">LSL</text>
<text x="390.4" y="159" font-size="6.7" textLength="11.00" lengthAdjust="spacingAndGlyphs" text-anchor="middle" font-weight="bold" stroke="#961f2c" stroke-width="0.11" fill="#961f2c">USL</text>
<polyline points="246.2,320.24 247.2,320.14 248.2,320.03 249.2,319.91 250.2,319.77 251.2,319.61 252.2,319.43 253.2,319.23 254.2,319.00 255.2,318.75 256.2,318.47 257.2,318.16 258.2,317.81 259.2,317.43 260.2,317.01 261.2,316.54 262.2,316.02 263.2,315.45 264.2,314.83 265.2,314.15 266.2,313.41 267.2,312.60 268.2,311.71 269.2,310.75 270.2,309.72 271.2,308.59 272.2,307.38 273.2,306.08 274.2,304.68 275.2,303.18 276.2,301.57 277.2,299.86 278.2,298.03 279.2,296.10 280.2,294.04 281.2,291.87 282.2,289.58 283.2,287.17 284.2,284.63 285.2,281.98 286.2,279.20 287.2,276.31 288.2,273.31 289.2,270.19 290.2,266.96 291.2,263.63 292.2,260.21 293.2,256.69 294.2,253.09 295.2,249.42 296.2,245.68 297.2,241.89 298.2,238.06 299.2,234.19 300.2,230.31 301.2,226.42 302.2,222.55 303.2,218.69 304.2,214.88 305.2,211.11 306.2,207.42 307.2,203.82 308.2,200.31 309.2,196.92 310.2,193.67 311.2,190.56 312.2,187.61 313.2,184.84 314.2,182.26 315.2,179.89 316.2,177.73 317.2,175.80 318.2,174.10 319.2,172.65 320.2,171.45 321.2,170.51 322.2,169.84 323.2,169.44 324.2,169.30 325.2,169.44 326.2,169.84 327.2,170.51 328.2,171.45 329.2,172.65 330.2,174.10 331.2,175.80 332.2,177.73 333.2,179.89 334.2,182.26 335.2,184.84 336.2,187.61 337.2,190.56 338.2,193.67 339.2,196.92 340.2,200.31 341.2,203.82 342.2,207.42 343.2,211.11 344.2,214.88 345.2,218.69 346.2,222.55 347.2,226.42 348.2,230.31 349.2,234.19 350.2,238.06 351.2,241.89 352.2,245.68 353.2,249.42 354.2,253.09 355.2,256.69 356.2,260.21 357.2,263.63 358.2,266.96 359.2,270.19 360.2,273.31 361.2,276.31 362.2,279.20 363.2,281.98 364.2,284.63 365.2,287.17 366.2,289.58 367.2,291.87 368.2,294.04 369.2,296.10 370.2,298.03 371.2,299.86 372.2,301.57 373.2,303.18 374.2,304.68 375.2,306.08 376.2,307.38 377.2,308.59 378.2,309.72 379.2,310.75 380.2,311.71 381.2,312.60 382.2,313.41 383.2,314.15 384.2,314.83 385.2,315.45 386.2,316.02 387.2,316.54 388.2,317.01 389.2,317.43 390.2,317.81 391.2,318.16 392.2,318.47 393.2,318.75 394.2,319.00 395.2,319.23 396.2,319.43 397.2,319.61 398.2,319.77 399.2,319.91 400.2,320.03 401.2,320.14 402.2,320.24 403.2,320.33 404.2,320.40 405.2,320.47 406.2,320.53 407.2,320.58 408.2,320.62 409.2,320.66 410.2,320.70 411.2,320.73" fill="none" stroke="#c01422" stroke-width="1.15"/>
<polyline points="246.2,320.17 247.2,320.06 248.2,319.94 249.2,319.81 250.2,319.66 251.2,319.49 252.2,319.30 253.2,319.08 254.2,318.84 255.2,318.58 256.2,318.28 257.2,317.95 258.2,317.59 259.2,317.19 260.2,316.74 261.2,316.25 262.2,315.71 263.2,315.13 264.2,314.48 265.2,313.78 266.2,313.01 267.2,312.17 268.2,311.26 269.2,310.28 270.2,309.22 271.2,308.07 272.2,306.83 273.2,305.51 274.2,304.08 275.2,302.56 276.2,300.94 277.2,299.21 278.2,297.37 279.2,295.42 280.2,293.35 281.2,291.17 282.2,288.87 283.2,286.46 284.2,283.93 285.2,281.28 286.2,278.52 287.2,275.65 288.2,272.66 289.2,269.57 290.2,266.37 291.2,263.08 292.2,259.69 293.2,256.22 294.2,252.67 295.2,249.06 296.2,245.38 297.2,241.66 298.2,237.89 299.2,234.10 300.2,230.30 301.2,226.50 302.2,222.70 303.2,218.94 304.2,215.21 305.2,211.54 306.2,207.94 307.2,204.43 308.2,201.01 309.2,197.72 310.2,194.55 311.2,191.53 312.2,188.66 313.2,185.97 314.2,183.47 315.2,181.17 316.2,179.07 317.2,177.20 318.2,175.55 319.2,174.15 320.2,172.99 321.2,172.08 322.2,171.42 323.2,171.03 324.2,170.90 325.2,171.03 326.2,171.42 327.2,172.08 328.2,172.99 329.2,174.15 330.2,175.55 331.2,177.20 332.2,179.07 333.2,181.17 334.2,183.47 335.2,185.97 336.2,188.66 337.2,191.53 338.2,194.55 339.2,197.72 340.2,201.01 341.2,204.43 342.2,207.94 343.2,211.54 344.2,215.21 345.2,218.94 346.2,222.70 347.2,226.50 348.2,230.30 349.2,234.10 350.2,237.89 351.2,241.66 352.2,245.38 353.2,249.06 354.2,252.67 355.2,256.22 356.2,259.69 357.2,263.08 358.2,266.37 359.2,269.57 360.2,272.66 361.2,275.65 362.2,278.52 363.2,281.28 364.2,283.93 365.2,286.46 366.2,288.87 367.2,291.17 368.2,293.35 369.2,295.42 370.2,297.37 371.2,299.21 372.2,300.94 373.2,302.56 374.2,304.08 375.2,305.51 376.2,306.83 377.2,308.07 378.2,309.22 379.2,310.28 380.2,311.26 381.2,312.17 382.2,313.01 383.2,313.78 384.2,314.48 385.2,315.13 386.2,315.71 387.2,316.25 388.2,316.74 389.2,317.19 390.2,317.59 391.2,317.95 392.2,318.28 393.2,318.58 394.2,318.84 395.2,319.08 396.2,319.30 397.2,319.49 398.2,319.66 399.2,319.81 400.2,319.94 401.2,320.06 402.2,320.17 403.2,320.26 404.2,320.35 405.2,320.42 406.2,320.48 407.2,320.54 408.2,320.59 409.2,320.63 410.2,320.67 411.2,320.70" fill="none" stroke="#2a2a2a" stroke-width="0.95" stroke-dasharray="5 1.6"/>
<text x="268.1" y="332.4" font-size="8.5" textLength="15.70" lengthAdjust="spacingAndGlyphs" text-anchor="middle" font-weight="bold" stroke="#2a2a2a" stroke-width="0.11" fill="#2a2a2a">0.50</text>
<text x="292.8" y="332.4" font-size="8.5" textLength="15.70" lengthAdjust="spacingAndGlyphs" text-anchor="middle" font-weight="bold" stroke="#2a2a2a" stroke-width="0.11" fill="#2a2a2a">0.52</text>
<text x="317.5" y="332.4" font-size="8.5" textLength="15.70" lengthAdjust="spacingAndGlyphs" text-anchor="middle" font-weight="bold" stroke="#2a2a2a" stroke-width="0.11" fill="#2a2a2a">0.54</text>
<text x="342.2" y="332.4" font-size="8.5" textLength="15.70" lengthAdjust="spacingAndGlyphs" text-anchor="middle" font-weight="bold" stroke="#2a2a2a" stroke-width="0.11" fill="#2a2a2a">0.56</text>
<text x="366.9" y="332.4" font-size="8.5" textLength="15.70" lengthAdjust="spacingAndGlyphs" text-anchor="middle" font-weight="bold" stroke="#2a2a2a" stroke-width="0.11" fill="#2a2a2a">0.58</text>
<text x="391.6" y="332.4" font-size="8.5" textLength="15.70" lengthAdjust="spacingAndGlyphs" text-anchor="middle" font-weight="bold" stroke="#2a2a2a" stroke-width="0.11" fill="#2a2a2a">0.60</text>
<line x1="425.3" y1="167.4" x2="444.4" y2="167.4" stroke="#c01422" stroke-width="1.1" />
<line x1="425.3" y1="176.6" x2="444.4" y2="176.6" stroke="#333" stroke-width="1" stroke-dasharray="6.5 2.2"/>
<text x="449.6" y="170.6" font-size="6.9" textLength="22.10" lengthAdjust="spacingAndGlyphs" stroke="#3a3a3a" stroke-width="0.11" fill="#3a3a3a">Overall</text>
<text x="449.6" y="179.6" font-size="6.9" textLength="20.40" lengthAdjust="spacingAndGlyphs" stroke="#3a3a3a" stroke-width="0.11" fill="#3a3a3a">Within</text>
<text x="444.1" y="196.7" font-size="6.9" textLength="55.90" lengthAdjust="spacingAndGlyphs" stroke="#3a3a3a" stroke-width="0.11" fill="#3a3a3a">Overall Capability</text>
<text x="453" y="204.8" font-size="6.9" textLength="8.44" lengthAdjust="spacingAndGlyphs" stroke="#3a3a3a" stroke-width="0.11" fill="#3a3a3a">Pp</text>
<text x="478.2" y="204.8" font-size="6.9" textLength="12.50" lengthAdjust="spacingAndGlyphs" stroke="#3a3a3a" stroke-width="0.11" fill="#3a3a3a">0.87</text>
<text x="453" y="213.6" font-size="6.9" textLength="11.20" lengthAdjust="spacingAndGlyphs" stroke="#3a3a3a" stroke-width="0.11" fill="#3a3a3a">PPL</text>
<text x="478.2" y="213.6" font-size="6.9" textLength="12.50" lengthAdjust="spacingAndGlyphs" stroke="#3a3a3a" stroke-width="0.11" fill="#3a3a3a">0.79</text>
<text x="453" y="222.5" font-size="6.9" textLength="12.50" lengthAdjust="spacingAndGlyphs" stroke="#3a3a3a" stroke-width="0.11" fill="#3a3a3a">PPU</text>
<text x="478.2" y="222.5" font-size="6.9" textLength="12.50" lengthAdjust="spacingAndGlyphs" stroke="#3a3a3a" stroke-width="0.11" fill="#3a3a3a">0.95</text>
<text x="453" y="230.9" font-size="6.9" textLength="11.89" lengthAdjust="spacingAndGlyphs" stroke="#3a3a3a" stroke-width="0.11" fill="#3a3a3a">Ppk</text>
<text x="478.2" y="230.9" font-size="6.9" textLength="12.50" lengthAdjust="spacingAndGlyphs" stroke="#3a3a3a" stroke-width="0.11" fill="#3a3a3a">0.79</text>
<text x="453" y="239.8" font-size="6.9" textLength="14.57" lengthAdjust="spacingAndGlyphs" stroke="#3a3a3a" stroke-width="0.11" fill="#3a3a3a">Cpm</text>
<text x="484.7" y="240" font-size="5.6" textLength="2.03" lengthAdjust="spacingAndGlyphs" text-anchor="middle" fill="#3a3a3a">*</text>
<text x="426.9" y="250.6" font-size="6.9" textLength="89.80" lengthAdjust="spacingAndGlyphs" stroke="#3a3a3a" stroke-width="0.11" fill="#3a3a3a">Potential (Within) Capability</text>
<text x="453" y="261.5" font-size="6.9" textLength="8.82" lengthAdjust="spacingAndGlyphs" stroke="#3a3a3a" stroke-width="0.11" fill="#3a3a3a">Cp</text>
<text x="478.2" y="261.5" font-size="6.9" textLength="12.50" lengthAdjust="spacingAndGlyphs" stroke="#3a3a3a" stroke-width="0.11" fill="#3a3a3a">0.86</text>
<text x="453" y="269.9" font-size="6.9" textLength="11.40" lengthAdjust="spacingAndGlyphs" stroke="#3a3a3a" stroke-width="0.11" fill="#3a3a3a">CPL</text>
<text x="478.2" y="269.9" font-size="6.9" textLength="12.50" lengthAdjust="spacingAndGlyphs" stroke="#3a3a3a" stroke-width="0.11" fill="#3a3a3a">0.79</text>
<text x="453" y="278.6" font-size="6.9" textLength="12.80" lengthAdjust="spacingAndGlyphs" stroke="#3a3a3a" stroke-width="0.11" fill="#3a3a3a">CPU</text>
<text x="478.2" y="278.6" font-size="6.9" textLength="12.50" lengthAdjust="spacingAndGlyphs" stroke="#3a3a3a" stroke-width="0.11" fill="#3a3a3a">0.94</text>
<text x="453" y="287.6" font-size="6.9" textLength="12.27" lengthAdjust="spacingAndGlyphs" stroke="#3a3a3a" stroke-width="0.11" fill="#3a3a3a">Cpk</text>
<text x="478.2" y="287.6" font-size="6.9" textLength="12.50" lengthAdjust="spacingAndGlyphs" stroke="#3a3a3a" stroke-width="0.11" fill="#3a3a3a">0.79</text>
<text x="228.1" y="349.8" font-size="6.9" textLength="40.10" lengthAdjust="spacingAndGlyphs" stroke="#3a3a3a" stroke-width="0.11" fill="#3a3a3a">Performance</text>
<text x="223.2" y="358.6" font-size="6.9" textLength="30.70" lengthAdjust="spacingAndGlyphs" text-anchor="end" stroke="#3a3a3a" stroke-width="0.11" fill="#3a3a3a">Observed</text>
<text x="286.9" y="358.6" font-size="6.9" textLength="53.20" lengthAdjust="spacingAndGlyphs" text-anchor="end" stroke="#3a3a3a" stroke-width="0.11" fill="#3a3a3a">Expected Overall</text>
<text x="350" y="358.6" font-size="6.9" textLength="52.00" lengthAdjust="spacingAndGlyphs" text-anchor="end" stroke="#3a3a3a" stroke-width="0.11" fill="#3a3a3a">Expected Within</text>
<text x="145.7" y="367.2" font-size="6.9" textLength="33.80" lengthAdjust="spacingAndGlyphs" stroke="#3a3a3a" stroke-width="0.11" fill="#3a3a3a">PPM &lt; LSL</text>
<text x="223.2" y="367.2" font-size="6.9" textLength="25.90" lengthAdjust="spacingAndGlyphs" text-anchor="end" stroke="#3a3a3a" stroke-width="0.11" fill="#3a3a3a">10416.67</text>
<text x="286.9" y="367.2" font-size="6.9" textLength="22.45" lengthAdjust="spacingAndGlyphs" text-anchor="end" stroke="#3a3a3a" stroke-width="0.11" fill="#3a3a3a">8604.01</text>
<text x="350" y="367.2" font-size="6.9" textLength="22.45" lengthAdjust="spacingAndGlyphs" text-anchor="end" stroke="#3a3a3a" stroke-width="0.11" fill="#3a3a3a">9196.10</text>
<text x="145.7" y="375.7" font-size="6.9" textLength="35.00" lengthAdjust="spacingAndGlyphs" stroke="#3a3a3a" stroke-width="0.11" fill="#3a3a3a">PPM &gt; USL</text>
<text x="223.2" y="375.7" font-size="6.9" textLength="25.90" lengthAdjust="spacingAndGlyphs" text-anchor="end" stroke="#3a3a3a" stroke-width="0.11" fill="#3a3a3a">10416.67</text>
<text x="286.9" y="375.7" font-size="6.9" textLength="22.45" lengthAdjust="spacingAndGlyphs" text-anchor="end" stroke="#3a3a3a" stroke-width="0.11" fill="#3a3a3a">2253.62</text>
<text x="350" y="375.7" font-size="6.9" textLength="22.45" lengthAdjust="spacingAndGlyphs" text-anchor="end" stroke="#3a3a3a" stroke-width="0.11" fill="#3a3a3a">2469.74</text>
<text x="145.7" y="384.9" font-size="6.9" textLength="32.90" lengthAdjust="spacingAndGlyphs" stroke="#3a3a3a" stroke-width="0.11" fill="#3a3a3a">PPM Total</text>
<text x="223.2" y="384.9" font-size="6.9" textLength="25.90" lengthAdjust="spacingAndGlyphs" text-anchor="end" stroke="#3a3a3a" stroke-width="0.11" fill="#3a3a3a">20833.33</text>
<text x="286.9" y="384.9" font-size="6.9" textLength="25.90" lengthAdjust="spacingAndGlyphs" text-anchor="end" stroke="#3a3a3a" stroke-width="0.11" fill="#3a3a3a">10857.63</text>
<text x="350" y="384.9" font-size="6.9" textLength="25.44" lengthAdjust="spacingAndGlyphs" text-anchor="end" stroke="#3a3a3a" stroke-width="0.11" fill="#3a3a3a">11665.84</text>
<text x="140.8" y="410.8" font-size="8.8" textLength="12.90" lengthAdjust="spacingAndGlyphs" font-style="italic" stroke="#444" stroke-width="0.11" fill="#444">The</text>
<text x="156.9" y="410.8" font-size="8.8" textLength="23.10" lengthAdjust="spacingAndGlyphs" font-style="italic" stroke="#444" stroke-width="0.11" fill="#444">actual</text>
<text x="182.7" y="410.8" font-size="8.8" textLength="27.40" lengthAdjust="spacingAndGlyphs" font-style="italic" stroke="#444" stroke-width="0.11" fill="#444">process</text>
<text x="213.9" y="410.8" font-size="8.8" textLength="24.70" lengthAdjust="spacingAndGlyphs" font-style="italic" stroke="#444" stroke-width="0.11" fill="#444">spread</text>
<text x="241.9" y="410.8" font-size="8.8" textLength="4.80" lengthAdjust="spacingAndGlyphs" font-style="italic" stroke="#444" stroke-width="0.11" fill="#444">is</text>
<text x="250.5" y="410.8" font-size="8.8" textLength="45.10" lengthAdjust="spacingAndGlyphs" font-style="italic" stroke="#444" stroke-width="0.11" fill="#444">represented</text>
<text x="298.8" y="410.8" font-size="8.8" textLength="8.60" lengthAdjust="spacingAndGlyphs" font-style="italic" stroke="#444" stroke-width="0.11" fill="#444">by</text>
<text x="310.7" y="410.8" font-size="8.8" textLength="4.30" lengthAdjust="spacingAndGlyphs" font-style="italic" stroke="#444" stroke-width="0.11" fill="#444">6</text>
<text x="318.2" y="410.8" font-size="8.8" textLength="24.00" lengthAdjust="spacingAndGlyphs" font-style="italic" stroke="#444" stroke-width="0.11" fill="#444">sigma.</text>
</svg>
</body>
</html>
